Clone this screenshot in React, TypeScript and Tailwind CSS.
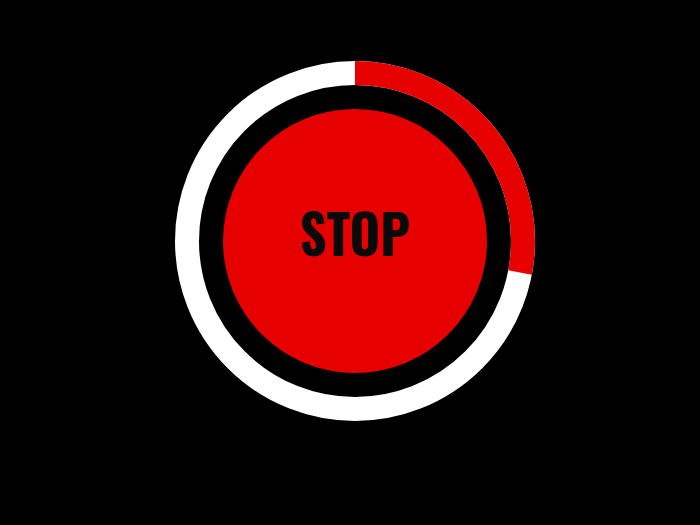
export default function App() {
  const progress = 0.28;
  const r = 168;
  const c = 2 * Math.PI * r;

  return (
    <div className="flex h-[525px] w-[700px] justify-center bg-black pl-[9px] pt-[61px]">
      <div className="grid h-[360px] w-[360px] place-items-center">
        <svg width="360" height="360" viewBox="0 0 360 360" className="[grid-area:1/1]">
          <circle cx="180" cy="180" r={r} fill="none" stroke="#ffffff" strokeWidth="24" />
          <circle
            cx="180"
            cy="180"
            r={r}
            fill="none"
            stroke="#e60000"
            strokeWidth="24"
            strokeDasharray={`${c * progress} ${c}`}
            transform="rotate(-90 180 180)"
          />
        </svg>
        <button className="flex h-[264px] w-[264px] items-center justify-center rounded-full bg-[#e60000] [grid-area:1/1]">
          <span className="mb-[19px] inline-block scale-x-[0.97] font-['Oswald','DejaVu_Sans_Condensed','DejaVu_Sans',sans-serif] text-[54px] font-bold leading-none text-[#0a0a0a]">
            STOP
          </span>
        </button>
      </div>
    </div>
  );
}
